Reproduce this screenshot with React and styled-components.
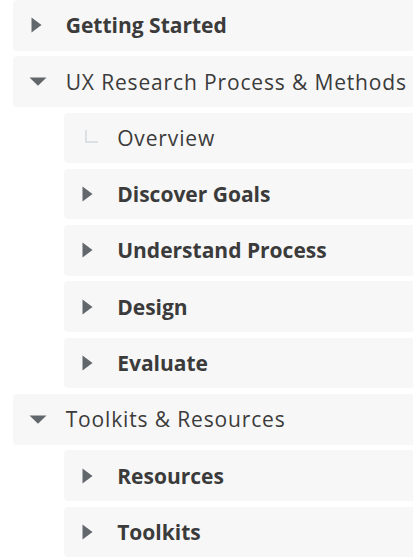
import React from 'react'
import styled, { createGlobalStyle } from 'styled-components'

const GlobalStyle = createGlobalStyle`
  html, body {
    margin: 0;
    padding: 0;
    background: #ffffff;
    overflow: hidden;
  }
  body {
    font-family: "Open Sans", Lato, Arial, sans-serif;
  }
`

const Tree = styled.ul`
  list-style: none;
  margin: 0 -12px 0 0;
  padding: 0 0 0 ${p => (p.$nested ? 51.5 : 12.7)}px;
  display: flex;
  flex-direction: column;
  gap: 5.8px;
`

const Node = styled.li`
  display: flex;
  flex-direction: column;
  gap: 5.8px;
`

const Row = styled.div`
  display: flex;
  align-items: center;
  height: 50.5px;
  background: #f7f7f7;
  border-radius: 4px;
  color: #3b3b3b;
  font-size: 21px;
  font-weight: ${p => (p.$bold ? 700 : 400)};
  letter-spacing: ${p => (p.$bold ? 0 : 0.85)}px;
  white-space: nowrap;
`

const IconSlot = styled.span`
  width: 53px;
  flex: none;
  display: flex;
  align-items: center;
  justify-content: center;
  padding-right: 3px;
  box-sizing: border-box;
`

const Caret = ({ open }) =>
  open ? (
    <svg width="18" height="9" viewBox="0 0 18 9">
      <path d="M0.5 0.5 H17.5 L9 8.7 Z" fill="#62676c" />
    </svg>
  ) : (
    <svg width="11" height="16" viewBox="0 0 11 16" style={{ marginLeft: -3 }}>
      <path d="M0.5 0.5 L10.5 8 L0.5 15.5 Z" fill="#62676c" />
    </svg>
  )

const Leaf = () => (
  <svg width="13" height="13" viewBox="0 0 13 13" style={{ marginLeft: 5, marginTop: -2 }}>
    <path d="M1 0 V12 H13" fill="none" stroke="#dce0e3" strokeWidth="2" />
  </svg>
)

const data = [
  { label: 'Getting Started', bold: true },
  {
    label: 'UX Research Process & Methods',
    open: true,
    children: [
      { label: 'Overview', leaf: true },
      { label: 'Discover Goals', bold: true },
      { label: 'Understand Process', bold: true },
      { label: 'Design', bold: true },
      { label: 'Evaluate', bold: true },
    ],
  },
  {
    label: 'Toolkits & Resources',
    open: true,
    children: [
      { label: 'Resources', bold: true },
      { label: 'Toolkits', bold: true },
    ],
  },
]

function Items({ items, nested }) {
  return (
    <Tree $nested={nested}>
      {items.map(item => (
        <Node key={item.label}>
          <Row $bold={item.bold}>
            <IconSlot>{item.leaf ? <Leaf /> : <Caret open={item.open} />}</IconSlot>
            {item.label}
          </Row>
          {item.children && <Items items={item.children} nested />}
        </Node>
      ))}
    </Tree>
  )
}

export default function App() {
  return (
    <>
      <GlobalStyle />
      <Items items={data} />
    </>
  )
}
